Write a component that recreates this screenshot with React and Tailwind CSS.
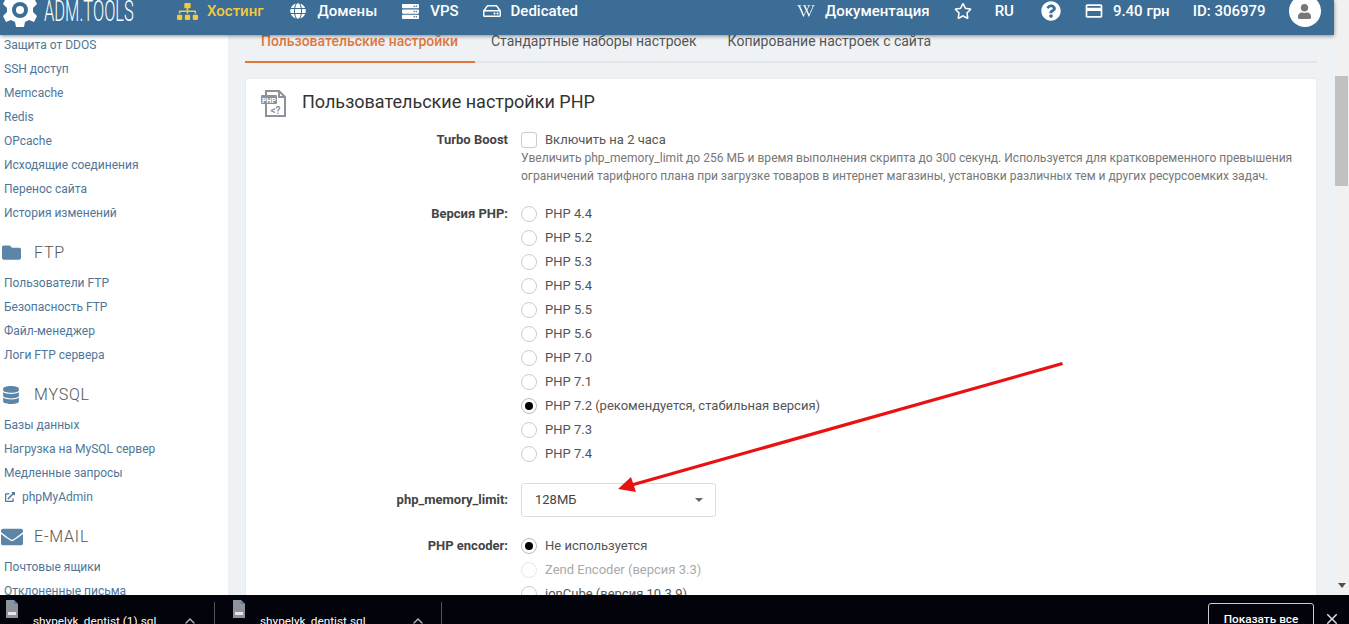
import { FaSitemap, FaGlobe, FaServer, FaRegHdd, FaWikipediaW, FaRegStar, FaQuestionCircle, FaUser, FaFolder, FaDatabase, FaEnvelope, FaExternalLinkAlt } from "react-icons/fa";
import { MdCreditCard, MdClose } from "react-icons/md";
import { ChevronUp } from "lucide-react";

const Item = ({ children }) => (
  <div className="h-6 flex items-center pl-1 text-xs text-[#4f7698]">{children}</div>
);

const Section = ({ icon, title }) => (
  <div className="mt-[15px] mb-[7px] h-6 pt-[1px] flex items-center text-[#5c85a8]">
    <div className="w-[34px] pl-[2px] flex">{icon}</div>
    <span className="text-base font-light tracking-wider text-[#555]">{title}</span>
  </div>
);

const NavItem = ({ icon, label, className }) => (
  <div className={`flex items-center font-medium text-[15px] ${className}`}>
    {icon}
    <span>{label}</span>
  </div>
);

const Radio = ({ label, checked, disabled }) => (
  <div className={`h-6 flex items-center text-[13px] ${disabled ? "text-[#aaa]" : "text-[#555]"}`}>
    <div className={`w-4 h-4 rounded-full border flex items-center justify-center mr-2 ${disabled ? "border-[#e8e8e8]" : checked ? "border-[#bbb]" : "border-[#ccc]"}`}>
      {checked && <div className="w-2 h-2 rounded-full bg-black" />}
    </div>
    {label}
  </div>
);

const Row = ({ label, children, className = "" }) => (
  <div className={`flex ${className}`}>
    <div className="w-[275px] pr-[13px] h-6 flex items-center justify-end text-[13px] font-bold text-[#444] shrink-0">
      {label}
    </div>
    <div className="flex-1">{children}</div>
  </div>
);

const FileIcon = () => (
  <svg width="14" height="18" viewBox="0 0 14 18" className="shrink-0">
    <path d="M1 0h8l4 4v14H1z" fill="#8d939a" />
    <path d="M9 0l4 4H9z" fill="#4a7fc0" />
    <rect x="3" y="12" width="8" height="3" fill="#e6e6e6" />
  </svg>
);

const phpVersions = ["PHP 4.4", "PHP 5.2", "PHP 5.3", "PHP 5.4", "PHP 5.5", "PHP 5.6", "PHP 7.0", "PHP 7.1"];

export default function App() {
  return (
    <div className="relative h-[624px] w-[1349px] overflow-hidden flex flex-col bg-[#eff2f5] font-['Roboto',sans-serif]">
      <div className="flex flex-1 min-h-0">
        <div className="w-[1334px] flex flex-col min-h-0">
          {/* Header */}
          <header className="relative z-10 h-[35px] shrink-0 bg-[#3b6d96] text-white flex items-center pb-[13px] shadow-[0_1px_4px_rgba(0,0,0,0.45)] overflow-hidden">
            <svg width="36" height="36" viewBox="0 0 36 36" className="ml-[2px] -mt-[3px] shrink-0">
              <path d="M14 1h8l1 5 4 2 5-2 3 6-4 4v4l4 4-3 6-5-2-4 2-1 5h-8l-1-5-4-2-5 2-3-6 4-4v-4L1 12l3-6 5 2 4-2z" fill="#fff" />
              <circle cx="18" cy="18" r="8" fill="#3b6d96" />
              <circle cx="18" cy="18" r="4" fill="#fff" />
            </svg>
            <span className="ml-[6px] -mt-[2px] w-[133px] text-[30px] font-light scale-x-[0.55] origin-left whitespace-nowrap">ADM.TOOLS</span>
            <NavItem className="text-[#f5c93e]" icon={<FaSitemap size={21} className="mr-[9px]" />} label="Хостинг" />
            <NavItem className="ml-[26px]" icon={<FaGlobe size={16} className="mr-3" />} label="Домены" />
            <NavItem className="ml-[25px]" icon={<FaServer size={17} className="mr-[11px]" />} label="VPS" />
            <NavItem className="ml-[24px]" icon={<FaRegHdd size={18} className="mr-[10px]" />} label="Dedicated" />
            <NavItem className="ml-[219px]" icon={<FaWikipediaW size={18} className="mr-[10px]" />} label="Документация" />
            <FaRegStar size={18} className="ml-6 shrink-0" />
            <span className="ml-[23px] font-medium text-[15px]">RU</span>
            <FaQuestionCircle size={20} className="ml-[27px] shrink-0" />
            <NavItem className="ml-[23px]" icon={<MdCreditCard size={20} className="mr-[9px]" />} label="9.40 грн" />
            <span className="ml-[23px] font-medium text-[15px]">ID: 306979</span>
            <div className="ml-[23px] w-8 h-8 rounded-full bg-white flex items-center justify-center shrink-0">
              <FaUser size={15} className="text-[#777]" />
            </div>
          </header>

          <div className="flex flex-1 min-h-0">
            {/* Sidebar */}
            <aside className="w-[228px] shrink-0 bg-white overflow-hidden">
              <div className="-mt-[2px]">
                <Item>Защита от DDOS</Item>
                <Item>SSH доступ</Item>
                <Item>Memcache</Item>
                <Item>Redis</Item>
                <Item>OPcache</Item>
                <Item>Исходящие соединения</Item>
                <Item>Перенос сайта</Item>
                <Item>История изменений</Item>
                <Section icon={<FaFolder size={19} />} title="FTP" />
                <Item>Пользователи FTP</Item>
                <Item>Безопасность FTP</Item>
                <Item>Файл-менеджер</Item>
                <Item>Логи FTP сервера</Item>
                <Section icon={<FaDatabase size={18} />} title="MYSQL" />
                <Item>Базы данных</Item>
                <Item>Нагрузка на MySQL сервер</Item>
                <Item>Медленные запросы</Item>
                <Item>
                  <FaExternalLinkAlt size={10} className="ml-[1px] mr-[7px]" />
                  phpMyAdmin
                </Item>
                <Section icon={<FaEnvelope size={22} className="-ml-[1px]" />} title="E-MAIL" />
                <Item>Почтовые ящики</Item>
                <Item>Отклоненные письма</Item>
              </div>
            </aside>

            {/* Main */}
            <main className="flex-1 min-w-0 pl-[17px] pr-[17px] overflow-hidden">
              <div className="flex h-7 border-b-2 border-[#e1e5e9] text-sm">
                <div className="h-7 w-[230px] pl-[16px] pb-[14px] flex items-center font-medium text-[#e0773c] border-b-2 border-[#e0773c]">
                  Пользовательские настройки
                </div>
                <div className="pl-[16px] pb-[14px] flex items-center text-[#555]">Стандартные наборы настроек</div>
                <div className="pl-[31px] pb-[14px] flex items-center text-[#555]">Копирование настроек с сайта</div>
              </div>

              <div className="mt-[15px] bg-white rounded-[3px] border border-[#e9ecef] h-[560px]">
                <div className="flex items-center h-[49px] pl-[15px]">
                  <svg width="28" height="28" viewBox="0 0 28 28" className="shrink-0 text-[#8b9299]">
                    <path d="M5 1h13l6 6v19H5z" fill="none" stroke="currentColor" strokeWidth="2" />
                    <path d="M18 1v6h6" fill="none" stroke="currentColor" strokeWidth="2" />
                    <rect x="0" y="5" width="16" height="9" rx="1" fill="currentColor" />
                    <text x="8" y="12.5" textAnchor="middle" fontSize="7" fontWeight="700" fill="#fff" fontFamily="Roboto">PHP</text>
                    <text x="14.5" y="23.5" textAnchor="middle" fontSize="10" fontWeight="700" fill="currentColor" fontFamily="Roboto">{"<?"}</text>
                  </svg>
                  <h1 className="ml-[13px] -mt-[3px] text-lg font-normal text-[#333]">Пользовательские настройки PHP</h1>
                </div>

                <Row label="Turbo Boost">
                  <div className="h-6 flex items-center text-[13px] text-[#555]">
                    <div className="w-4 h-4 rounded-[3px] border border-[#ccc] mr-2" />
                    Включить на 2 часа
                  </div>
                  <p className="-mt-[3px] w-[790px] text-[12.05px] leading-[18px] text-[#777]">
                    Увеличить php_memory_limit до 256 МБ и время выполнения скрипта до 300 секунд. Используется для кратковременного превышения ограничений тарифного плана при загрузке товаров в интернет магазины, установки различных тем и других ресурсоемких задач.
                  </p>
                </Row>

                <Row label="Версия PHP:" className="mt-[17px]">
                  {phpVersions.map((v) => (
                    <Radio key={v} label={v} />
                  ))}
                  <Radio label="PHP 7.2 (рекомендуется, стабильная версия)" checked />
                  <Radio label="PHP 7.3" />
                  <Radio label="PHP 7.4" />
                </Row>

                <div className="flex items-center mt-[17px]">
                  <div className="w-[275px] pr-[13px] text-right text-[13px] font-bold text-[#444]">php_memory_limit:</div>
                  <div className="w-[195px] h-[34px] rounded-[3px] border border-[#ddd] flex items-center justify-between pl-[13px] pr-[12px] text-[13px] text-[#444]">
                    128МБ
                    <div className="w-0 h-0 border-x-4 border-x-transparent border-t-4 border-t-[#666]" />
                  </div>
                </div>

                <Row label="PHP encoder:" className="mt-[17px]">
                  <Radio label="Не используется" checked />
                  <Radio label="Zend Encoder (версия 3.3)" disabled />
                  <Radio label="ionCube (версия 10.3.9)" />
                </Row>
              </div>
            </main>
          </div>
        </div>

        {/* Scrollbar */}
        <div className="w-[15px] shrink-0 bg-[#f1f1f1] flex flex-col">
          <div className="mt-[76px] h-[110px] mx-[1px] bg-[#c1c1c1]" />
          <div className="flex-1" />
          <div className="mb-[7px] self-center w-0 h-0 border-x-4 border-x-transparent border-t-[5px] border-t-[#505050]" />
        </div>
      </div>

      {/* Downloads bar */}
      <div className="relative z-10 h-[29px] shrink-0 bg-[#02030b] text-white flex text-[11.8px] overflow-hidden">
        <div className="flex w-[215px] h-[42px] mt-[7px] border-r border-[#555]">
          <div className="ml-[5px] mt-[-2px]"><FileIcon /></div>
          <span className="ml-[14px] mt-[9px] w-[149px] leading-[20px] whitespace-nowrap">shypelyk_dentist (1).sql</span>
          <ChevronUp size={16} className="mt-[11px] text-[#bbb]" />
        </div>
        <div className="flex w-[227px] h-[42px] mt-[7px] border-r border-[#555]">
          <div className="ml-[17px] mt-[-2px]"><FileIcon /></div>
          <span className="ml-[14px] mt-[9px] w-[150px] leading-[20px] whitespace-nowrap">shypelyk_dentist.sql</span>
          <ChevronUp size={16} className="mt-[11px] text-[#bbb]" />
        </div>
        <div className="flex-1" />
        <div className="mt-[8px] w-[106px] h-[34px] rounded-[3px] border border-[#ccc] flex items-center justify-center font-medium">Показать все</div>
        <MdClose size={18} className="ml-[9px] mr-[8px] mt-[15px] text-[#ddd]" />
      </div>

      {/* Red annotation arrow */}
      <svg className="absolute left-0 top-0 z-20 pointer-events-none" width="1349" height="624">
        <path d="M1062 362L1063 365L634 486L636 492L618 489L631 477L633 483Z" fill="#e81212" />
      </svg>
    </div>
  );
}
